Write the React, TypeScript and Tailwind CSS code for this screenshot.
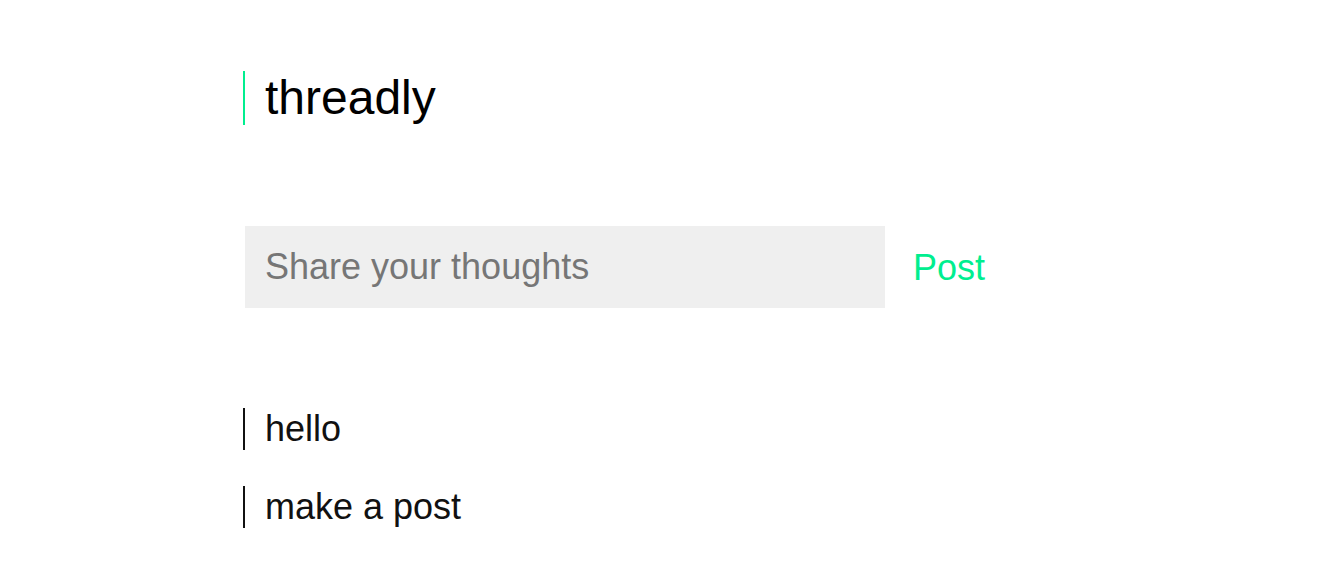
import { useState } from 'react';

const initialPosts = ['hello', 'make a post'];

export default function App() {
  const [posts, setPosts] = useState<string[]>(initialPosts);
  const [draft, setDraft] = useState('');

  const handlePost = () => {
    if (!draft.trim()) return;
    setPosts((prev) => [...prev, draft.trim()]);
    setDraft('');
  };

  return (
    <div className="min-h-screen bg-white font-['Liberation_Sans',Arial,sans-serif] text-black">
      <main className="mx-auto w-[834px] pt-[71px]">
        <h1 className="border-l-2 border-[#00ee8f] pl-[20px] text-[48px] leading-[54px]">threadly</h1>

        <form
          className="mt-[101px] flex items-center"
          onSubmit={(e) => {
            e.preventDefault();
            handlePost();
          }}
        >
          <input
            value={draft}
            onChange={(e) => setDraft(e.target.value)}
            placeholder="Share your thoughts"
            className="ml-[2px] h-[82px] w-[640px] bg-[#efefef] px-[20px] text-[36px] outline-none placeholder:text-[#767676]"
          />
          <button type="submit" className="ml-[28px] text-[36px] leading-[41px] text-[#00ee8f]">
            Post
          </button>
        </form>

        <ul className="mt-[100px] flex flex-col gap-[36px]">
          {posts.map((post, i) => (
            <li key={i} className="border-l-2 border-[#111] pl-[20px] text-[36px] leading-[42px] text-[#111]">
              {post}
            </li>
          ))}
        </ul>
      </main>
    </div>
  );
}
